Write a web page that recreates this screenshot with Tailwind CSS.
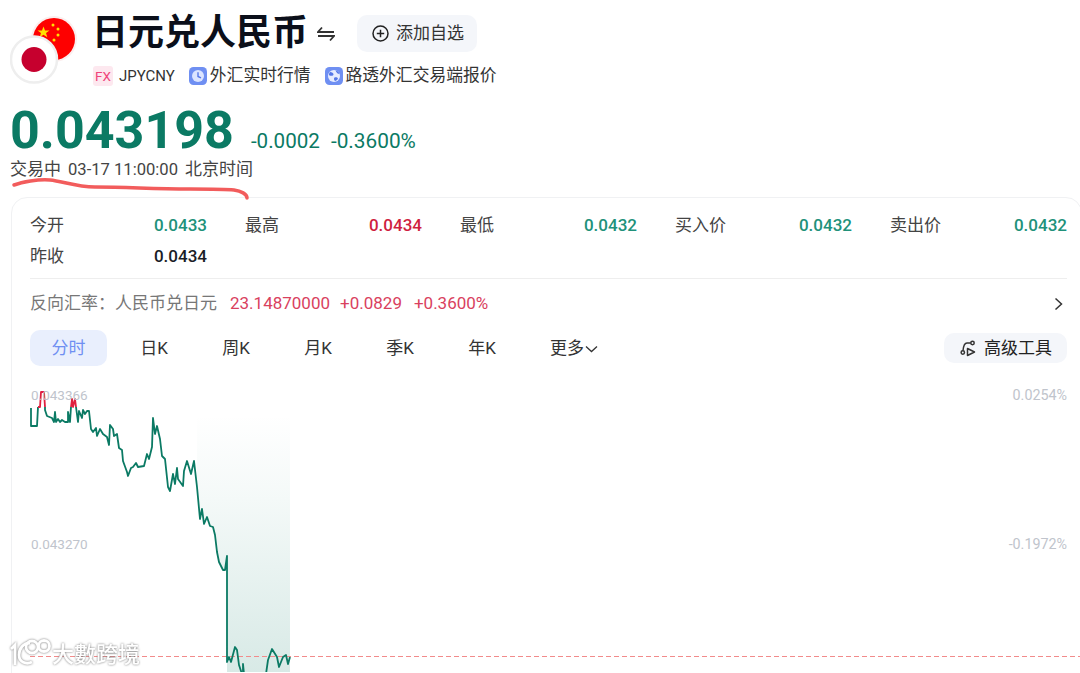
<!DOCTYPE html>
<html lang="zh">
<head>
<meta charset="UTF-8">
<title>日元兑人民币</title>
<script src="https://cdn.jsdelivr.net/npm/@tailwindcss/browser@4"></script>
</head>
<body class="bg-white overflow-hidden font-['Roboto','Noto_Sans_CJK_SC',sans-serif] text-[#333]">
<div class="relative w-[1080px] h-[673px] overflow-hidden">

  <!-- Header -->
  <div class="flex pl-[10px] pt-[15px] h-[102px]">
    <svg class="w-[82px] h-[85px] -mt-[15px] shrink-0" viewBox="10 0 82 85">
      <circle cx="54" cy="39" r="23" fill="#fbeeee"/>
      <circle cx="54" cy="39" r="21" fill="#fe0000"/>
      <polygon points="43.5,26.5 45,30.5 49.5,30.5 46,33 47.3,37.3 43.5,34.8 39.7,37.3 41,33 37.5,30.5 42,30.5" fill="#ffe000"/>
      <circle cx="53" cy="25" r="1.5" fill="#ffe000"/>
      <circle cx="58" cy="29" r="1.5" fill="#ffe000"/>
      <circle cx="58" cy="35" r="1.5" fill="#ffe000"/>
      <circle cx="54" cy="40" r="1.5" fill="#ffe000"/>
      <circle cx="34" cy="59.500" r="23" fill="#fff" stroke="#eeeeee" stroke-width="2.500"/>
      <circle cx="34" cy="59.500" r="12.5" fill="#c6002e"/>
    </svg>
    <div class="flex flex-col">
      <div class="flex items-center h-[37px]">
        <h1 class="text-[36px] leading-[37px] font-bold text-[#0b0f1a]">日元兑人民币</h1>
        <svg class="w-[18px] h-[16px] ml-[9px]" viewBox="0 0 18 16" fill="none" stroke="#333" stroke-width="1.8">
          <path d="M5 1.500 1 6h16M13 14.500 17 10H1"/>
        </svg>
        <button class="flex items-center w-[120px] h-[37px] pl-[15px] gap-[7px] ml-[22px] rounded-[10px] bg-[#f4f6fa] text-[17px]">
          <svg class="w-[17px] h-[17px]" viewBox="0 0 17 17" fill="none" stroke="#222" stroke-width="1.5">
            <circle cx="8.5" cy="8.5" r="7.5"/><path d="M8.5 4.8v7.4M4.8 8.5h7.4"/>
          </svg>
          添加自选
        </button>
      </div>
      <div class="flex items-center h-[20px] mt-[14px] ml-[1px] text-[16.8px]">
        <span class="flex items-center justify-center w-[20px] h-[20px] rounded-[3px] bg-[#fde8ef] text-[#f0447a] text-[13.500px]">FX</span>
        <span class="ml-[6px] text-[15px]">JPYCNY</span>
        <svg class="w-[18px] h-[18px] ml-[14px]" viewBox="0 0 18 18">
          <rect width="18" height="18" rx="4.5" fill="#6f8ff2"/>
          <circle cx="9" cy="9" r="6" fill="#dbe4ff"/>
          <path d="M9 5.200V9.500l3 1.400" fill="none" stroke="#5577e8" stroke-width="1.4"/>
        </svg>
        <span class="ml-[3px]">外汇实时行情</span>
        <svg class="w-[18px] h-[18px] ml-[14px]" viewBox="0 0 18 18">
          <rect width="18" height="18" rx="4.5" fill="#6f8ff2"/>
          <circle cx="9" cy="9" r="6" fill="#e6ecff"/>
          <path d="M5 5c2 0 3.500 1 3.500 2.500S6 9 4.500 8.500C3.500 8 4 6 5 5zM9.500 10.500c1.500-.5 3 0 3.500 1-.5 1.500-2 2.500-3 2.500-1-1-1.500-2.500-.5-3.500zM10.500 3.500c1.500 0 3.500 1.500 4 3.500-1.500 0-3-1-4-3.500z" fill="#5577e8"/>
        </svg>
        <span class="ml-[3px]">路透外汇交易端报价</span>
      </div>
    </div>
  </div>

  <!-- Price -->
  <div class="flex items-baseline pl-[10px] pt-[1px] h-[56px] text-[#0b7a64]">
    <span class="text-[52px] leading-[55px] font-bold">0.043198</span>
    <span class="ml-[17px] text-[20.600px]">-0.0002</span>
    <span class="ml-[11px] text-[20.800px]">-0.3600%</span>
  </div>
  <div class="flex items-center pl-[10px] h-[24px] text-[#444]">
    <span class="text-[17px]">交易中</span>
    <span class="ml-[7px] text-[16.600px]">03-17 11:00:00</span>
    <span class="ml-[7px] text-[17px]">北京时间</span>
  </div>

  <!-- Card -->
  <div class="ml-[11px] mt-[15px] pl-[18px] w-[1071px] h-[500px] border border-[#f0f1f3] rounded-t-2xl">
    <div class="w-[1037px] h-[81px] pt-[12px] border-b border-[#eeeeee] text-[17px]">
      <div class="grid grid-cols-5 gap-x-[38px] w-[1037px]">
        <div class="flex justify-between h-[31px] items-center"><span class="text-[#444]">今开</span><span class="font-medium text-[#21917a]">0.0433</span></div>
        <div class="flex justify-between h-[31px] items-center"><span class="text-[#444]">最高</span><span class="font-medium text-[#cf1f3f]">0.0434</span></div>
        <div class="flex justify-between h-[31px] items-center"><span class="text-[#444]">最低</span><span class="font-medium text-[#21917a]">0.0432</span></div>
        <div class="flex justify-between h-[31px] items-center"><span class="text-[#444]">买入价</span><span class="font-medium text-[#21917a]">0.0432</span></div>
        <div class="flex justify-between h-[31px] items-center"><span class="text-[#444]">卖出价</span><span class="font-medium text-[#21917a]">0.0432</span></div>
        <div class="flex justify-between h-[31px] items-center"><span class="text-[#444]">昨收</span><span class="font-medium text-[#1a1d26]">0.0434</span></div>
      </div>
    </div>
    <div class="flex items-center w-[1037px] h-[50px] text-[17px]">
      <span class="text-[#777]">反向汇率：人民币兑日元</span>
      <span class="ml-[13px] text-[#d9415e]">23.14870000</span>
      <span class="ml-[10px] text-[#d9415e]">+0.0829</span>
      <span class="ml-[12px] text-[#d9415e]">+0.3600%</span>
      <svg class="w-[9px] h-[14px] ml-auto mr-[4px]" viewBox="0 0 9 14" fill="none" stroke="#333" stroke-width="1.5"><path d="M1.500 1.500 7.500 7l-6 5.500"/></svg>
    </div>
    <div class="flex items-center w-[1037px] h-[38px] text-[17px]">
      <span class="flex items-center justify-center w-[77px] h-[36px] pt-[2px] rounded-[10px] bg-[#e9effd] text-[#6f8ff2]">分时</span>
      <span class="w-[82px] ml-[6px] pt-[2px] text-center">日K</span>
      <span class="w-[82px] pt-[2px] text-center">周K</span>
      <span class="w-[82px] pt-[2px] text-center">月K</span>
      <span class="w-[82px] pt-[2px] text-center">季K</span>
      <span class="w-[82px] pt-[2px] text-center">年K</span>
      <span class="flex items-center pl-[27px] pt-[2px]">更多<svg class="w-[13px] h-[8px] ml-[1px]" viewBox="0 0 13 8" fill="none" stroke="#333" stroke-width="1.300"><path d="M1 1.500 6.500 6.500 12 1.500"/></svg></span>
      <button class="flex items-center w-[123px] h-[30px] pl-[16px] pt-[1px] gap-[7px] ml-auto rounded-[10px] bg-[#f4f6fa] text-[#222]">
        <svg class="w-[17px] h-[17px]" viewBox="0 0 17 17" fill="none" stroke="#333" stroke-width="1.5">
          <circle cx="12.500" cy="3" r="1.700"/><circle cx="2.800" cy="12.500" r="1.700"/>
          <path d="M10.800 3H7C5 3 3.500 5 3 10.800M7.500 8.500v7l7-3.500z" stroke-linejoin="round"/>
        </svg>
        高级工具
      </button>
    </div>

    <!-- Chart -->
    <div class="relative -ml-[19px] mt-[12px] w-[1071px] h-[293px]">
      <svg class="absolute inset-0 w-[1071px] h-[293px]" viewBox="11 380 1071 293" fill="none">
        <defs>
          <linearGradient id="areaFill" x1="0" y1="0" x2="0" y2="1">
            <stop offset="0" stop-color="#0b7a64" stop-opacity="0"/>
            <stop offset="0.3" stop-color="#0b7a64" stop-opacity="0.04"/>
            <stop offset="1" stop-color="#0b7a64" stop-opacity="0.16"/>
          </linearGradient>
        </defs>
        <polygon fill="url(#areaFill)" points="290,415 197,415 197,488 200,520 202,510 204,525 207,518 210,527 213,528 215,536 217,553 219,563 223,571 225,571 227,557 227,673 290,673"/>
        <line x1="30" y1="657.500" x2="1082" y2="657.500" stroke="#f28b8b" stroke-dasharray="5 3"/>
        <polyline stroke="#0b7a64" stroke-width="1.800" stroke-linejoin="round" points="31,409 31,427 37,427 38,408"/>
        <polyline stroke="#e0203f" stroke-width="1.800" stroke-linejoin="round" points="38,408 40,408 41,393 44,393 45,408"/>
        <polyline stroke="#0b7a64" stroke-width="1.800" stroke-linejoin="round" points="45,408 45,411 47,417 52,419 54,423 55,413 56,423 58,420 60,423 62,421 65,423 68,423 68,413 70,423 71,408"/>
        <polyline stroke="#e0203f" stroke-width="1.800" stroke-linejoin="round" points="71,408 72,400 73,408 75,400 76,408"/>
        <polyline stroke="#0b7a64" stroke-width="1.800" stroke-linejoin="round" points="76,408 78,423 79,412 82,419 83,411 85,415 87,412 89,412 91,430 93,433 96,429 97,437 100,430 103,435 107,438 109,446 110,426 113,430 114,437 117,435 119,449 122,451 123,462 127,473 128,477 131,469 133,468 136,464 138,468 144,467 147,455 149,460 152,448 153,419 155,435 157,427 160,440 162,457 165,460 168,488 170,492 173,475 175,485 177,469 178,480 183,487 184,472 187,462 191,475 194,462 197,488 200,520 202,510 204,525 207,518 210,527 213,528 215,536 217,553 219,563 223,571 225,571 227,557 227,663 229,658 231,663 235,648 237,651 239,666 242,675"/>
        <polyline stroke="#0b7a64" stroke-width="1.800" stroke-linejoin="round" points="243,675 243,665 244,675"/>
        <polyline stroke="#0b7a64" stroke-width="1.800" stroke-linejoin="round" points="266,675 268,661 272,650 277,658 279,668 283,658 286,656 288,665 290,658"/>
      </svg>
      <span class="absolute left-[20px] top-[8px] text-[13.500px] leading-[16px] text-[#c0c4cc]">0.043366</span>
      <span class="absolute left-[20px] top-[157px] text-[13.500px] leading-[16px] text-[#c0c4cc]">0.043270</span>
      <span class="absolute right-[15px] top-[8px] text-[14.300px] leading-[16px] text-[#c0c4cc]">0.0254%</span>
      <span class="absolute right-[15px] top-[157px] text-[14.300px] leading-[16px] text-[#c0c4cc]">-0.1972%</span>
    </div>
  </div>

  <!-- Hand-drawn underline -->
  <svg class="absolute left-0 top-[170px] w-[260px] h-[35px]" viewBox="0 170 260 35" fill="none">
    <path d="M14 185C22 182 38 179 50 180 62 181 76 187 95 187 130 187 150 189 190 189 210 189 225 189 234 190 241 191 247 194 247 198" stroke="#f25c5c" stroke-width="3.500" stroke-linecap="round" stroke-linejoin="round"/>
  </svg>

  <!-- Watermark -->
  <div class="absolute left-[9px] top-[637px] flex items-center text-white [filter:drop-shadow(0_0_1px_#777)]">
    <svg class="w-[42px] h-[30px]" viewBox="0 0 42 30" fill="none" stroke="#fff" stroke-width="2.800">
      <path d="M2 12 6 8V28M21 6C14 6 10 12 10 18 10 25 17 28 23 25"/>
      <circle cx="23" cy="10" r="6"/><circle cx="35" cy="9" r="5.500"/>
    </svg>
    <span class="ml-[1px] text-[22px] leading-[30px] font-medium font-['Noto_Sans_CJK_TC',sans-serif]">大數跨境</span>
  </div>
</div>
</body>
</html>
